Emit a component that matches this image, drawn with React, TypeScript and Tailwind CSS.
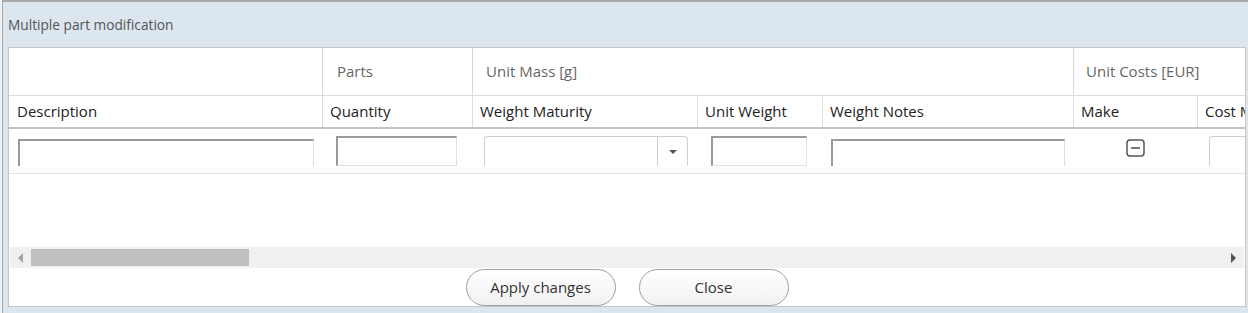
import React from 'react';

const font = { fontFamily: '"Open Sans", "Noto Sans", sans-serif' };

const TextBox = ({ width, tall }: { width: number; tall?: boolean }) => (
  <div
    className={
      tall
        ? 'h-[27px] border-t-2 border-l-2 border-r border-[#9a9a9a] border-r-[#dcdcdc] bg-white'
        : 'h-[30px] border-t-2 border-l-2 border-r border-b border-[#9a9a9a] border-r-[#e2e2e2] border-b-[#e2e2e2] bg-white'
    }
    style={{ width }}
  />
);

const MakeIcon = () => (
  <svg width="19" height="18" viewBox="0 0 19 18">
    <rect x="1" y="1" width="17" height="16" rx="3" fill="white" stroke="#555" strokeWidth="1.5" />
    <line x1="5" y1="9" x2="14" y2="9" stroke="#555" strokeWidth="1.6" />
  </svg>
);

export default function App() {
  return (
    <div className="w-[1248px] h-[313px] bg-[#f3f3f3] overflow-hidden" style={font}>
      <div className="ml-[2px] h-[313px] bg-[#dbe6ef] border-t-2 border-l border-[#a8a8a8] flex flex-col">
        <div className="h-[45px] flex items-center pl-[5px] pt-[2px] text-[13.7px] text-[#555]">
          Multiple part modification
        </div>

        <div className="ml-[5px] w-[1238px] h-[260px] bg-white border border-[#c6c6c6] flex flex-col">
          <div className="overflow-hidden w-[1236px]">
            {/* group header */}
            <div className="flex h-[48px] border-b border-[#dcdcdc] text-[15px] text-[#666] whitespace-nowrap">
              <div className="w-[313px] shrink-0" />
              <div className="w-[150px] shrink-0 border-l border-[#d8d8d8] pl-[14px] flex items-center">Parts</div>
              <div className="w-[601px] shrink-0 border-l border-[#d8d8d8] pl-[13px] flex items-center">Unit Mass [g]</div>
              <div className="w-[300px] shrink-0 border-l border-[#d8d8d8] pl-[12px] flex items-center">Unit Costs [EUR]</div>
            </div>

            {/* column header */}
            <div className="flex h-[33px] border-b-2 border-[#c4c4c4] text-[15px] text-[#222] whitespace-nowrap">
              <div className="w-[313px] shrink-0 pl-[8px] flex items-center">Description</div>
              <div className="w-[150px] shrink-0 border-l border-[#dcdcdc] pl-[7px] flex items-center">Quantity</div>
              <div className="w-[225px] shrink-0 border-l border-[#dcdcdc] pl-[7px] flex items-center">Weight Maturity</div>
              <div className="w-[125px] shrink-0 border-l border-[#dcdcdc] pl-[7px] flex items-center">Unit Weight</div>
              <div className="w-[251px] shrink-0 border-l border-[#dcdcdc] pl-[7px] flex items-center">Weight Notes</div>
              <div className="w-[124px] shrink-0 border-l border-[#dcdcdc] pl-[7px] flex items-center">Make</div>
              <div className="w-[150px] shrink-0 border-l border-[#dcdcdc] pl-[7px] flex items-center">Cost Model</div>
            </div>

            {/* edit row */}
            <div className="flex h-[45px] border-b border-[#e4e4e4]">
              <div className="w-[313px] shrink-0 pl-[9px] pt-[10px]">
                <TextBox width={296} tall />
              </div>
              <div className="w-[150px] shrink-0 pl-[14px] pt-[7px]">
                <TextBox width={121} />
              </div>
              <div className="w-[225px] shrink-0 pl-[12px] pt-[7px]">
                <div className="w-[204px] h-[30px] border border-b-0 border-[#cfcfcf] rounded-t-[4px] flex justify-end">
                  <div className="w-[30px] border-l border-[#cfcfcf] flex items-center justify-center">
                    <svg width="8" height="4" viewBox="0 0 8 4">
                      <path d="M0 0 L8 0 L4 4 Z" fill="#555" />
                    </svg>
                  </div>
                </div>
              </div>
              <div className="w-[125px] shrink-0 pl-[14px] pt-[7px]">
                <TextBox width={96} />
              </div>
              <div className="w-[251px] shrink-0 pl-[9px] pt-[10px]">
                <TextBox width={234} tall />
              </div>
              <div className="w-[124px] shrink-0 flex justify-center pt-[10px]">
                <MakeIcon />
              </div>
              <div className="w-[150px] shrink-0 pl-[12px] pt-[7px]">
                <div className="w-[120px] h-[30px] border border-b-0 border-[#cfcfcf] rounded-tl-[4px]" />
              </div>
            </div>
          </div>

          <div className="flex-1" />

          {/* horizontal scrollbar */}
          <div className="ml-px w-[1234px] h-[21px] bg-[#f0f0f0] flex items-center">
            <div className="w-[21px] flex items-center justify-center">
              <svg width="6" height="10" viewBox="0 0 6 10">
                <path d="M5 0 L5 10 L0 5 Z" fill="#a3a3a3" />
              </svg>
            </div>
            <div className="w-[218px] h-[17px] bg-[#c0c0c0]" />
            <div className="flex-1" />
            <div className="w-[21px] flex items-center justify-center">
              <svg width="6" height="10" viewBox="0 0 6 10">
                <path d="M0 0 L0 10 L5 5 Z" fill="#505050" />
              </svg>
            </div>
          </div>

          {/* buttons */}
          <div className="h-[38px] flex justify-center items-start gap-[23px] pt-px">
            <button className="w-[150px] h-[37px] rounded-full border border-[#a0a0a0] bg-gradient-to-b from-white to-[#f1f1f1] text-[15px] text-[#333]">
              Apply changes
            </button>
            <button className="w-[150px] h-[37px] rounded-full border border-[#a0a0a0] bg-gradient-to-b from-white to-[#f1f1f1] text-[15px] text-[#333]">
              Close
            </button>
          </div>
        </div>
      </div>
    </div>
  );
}
